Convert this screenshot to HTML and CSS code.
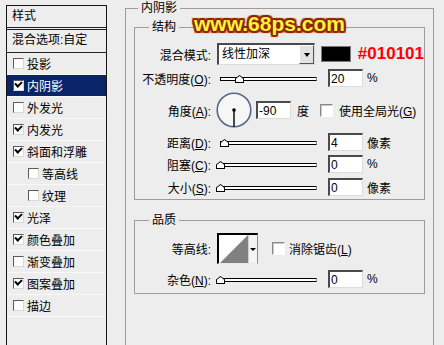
FILE: index.html
```html
<!DOCTYPE html>
<html lang="zh-CN">
<head>
  <meta charset="UTF-8" />
  <title>图层样式 - 内阴影</title>
  <link rel="stylesheet" href="styles.css">
</head>
<body>
  <div class="dialog">
    <div class="style-list">
      <div class="list-head">样式</div>
      <div class="list-blend">混合选项:自定</div>
      <div class="list-item"><span class="chk"></span>投影</div>
      <div class="list-item active"><span class="chk checked"></span>内阴影</div>
      <div class="list-item"><span class="chk"></span>外发光</div>
      <div class="list-item"><span class="chk checked"></span>内发光</div>
      <div class="list-item"><span class="chk checked"></span>斜面和浮雕</div>
      <div class="list-item sub"><span class="chk"></span>等高线</div>
      <div class="list-item sub"><span class="chk"></span>纹理</div>
      <div class="list-item"><span class="chk checked"></span>光泽</div>
      <div class="list-item"><span class="chk checked"></span>颜色叠加</div>
      <div class="list-item"><span class="chk"></span>渐变叠加</div>
      <div class="list-item"><span class="chk checked"></span>图案叠加</div>
      <div class="list-item"><span class="chk"></span>描边</div>
    </div>

    <fieldset class="group outer">
      <legend>内阴影</legend>

      <fieldset class="group section">
        <legend>结构</legend>
        <div class="row first">
          <span class="label">混合模式:</span>
          <div class="select">
            <span class="select-text">线性加深</span>
            <span class="select-btn"><i class="arrow"></i></span>
          </div>
          <span class="swatch"></span>
          <span class="color-code">#010101</span>
        </div>
        <div class="row gap2">
          <span class="label">不透明度(<u>O</u>):</span>
          <div class="slider"><div class="track"></div><span class="thumb" style="left:19px"></span></div>
          <input class="num" type="text" value="20">
          <span class="unit">%</span>
        </div>
        <div class="row angle">
          <span class="label">角度(<u>A</u>):</span>
          <svg class="dial" width="36" height="36" viewBox="0 0 36 36">
            <circle cx="18" cy="18" r="16.8" fill="#f6f6f6" stroke="#57668f" stroke-width="1.6"/>
            <line x1="18" y1="18" x2="18" y2="35" stroke="#000" stroke-width="1.4"/>
            <circle cx="18" cy="18" r="1.8" fill="#000"/>
          </svg>
          <input class="num angle-num" type="text" value="-90">
          <span class="unit deg">度</span>
          <span class="chk big"></span>
          <span class="chk-label">使用全局光(<u>G</u>)</span>
        </div>
        <div class="row gap3">
          <span class="label">距离(<u>D</u>):</span>
          <div class="slider"><div class="track"></div><span class="thumb" style="left:4px"></span></div>
          <input class="num" type="text" value="4">
          <span class="unit">像素</span>
        </div>
        <div class="row">
          <span class="label">阻塞(<u>C</u>):</span>
          <div class="slider"><div class="track"></div><span class="thumb" style="left:0px"></span></div>
          <input class="num" type="text" value="0">
          <span class="unit">%</span>
        </div>
        <div class="row gap1">
          <span class="label">大小(<u>S</u>):</span>
          <div class="slider"><div class="track"></div><span class="thumb" style="left:0px"></span></div>
          <input class="num" type="text" value="0">
          <span class="unit">像素</span>
        </div>
      </fieldset>

      <fieldset class="group section quality">
        <legend>品质</legend>
        <div class="row contour-row">
          <span class="label">等高线:</span>
          <div class="contour">
            <svg class="curve" width="29" height="28" viewBox="0 0 29 28">
              <polygon points="1,28 29,0 29,28" fill="#808080"/>
            </svg>
            <span class="contour-drop"><i class="arrow small"></i></span>
          </div>
          <span class="chk big aa"></span>
          <span class="chk-label aa-label">消除锯齿(<u>L</u>)</span>
        </div>
        <div class="row gap4">
          <span class="label">杂色(<u>N</u>):</span>
          <div class="slider"><div class="track"></div><span class="thumb" style="left:0px"></span></div>
          <input class="num" type="text" value="0">
          <span class="unit">%</span>
        </div>
      </fieldset>
    </fieldset>

    <div class="watermark">www.68ps.com</div>
  </div>
</body>
</html>
```

FILE: styles.css
```css
* {
  box-sizing: border-box;
}
body {
  margin: 0;
  width: 444px;
  height: 345px;
  overflow: hidden;
  background-color: #ededed;
  font-family: "Liberation Sans", "Noto Sans CJK SC", sans-serif;
  font-size: 12px;
  color: #000;
}
.dialog {
  position: relative;
  display: flex;
  align-items: flex-start;
}

/* 左侧样式列表 */
.style-list {
  margin: 5px 0 0 6px;
  width: 101px;
  height: 345px;
  border: 1px solid #161616;
  border-bottom: none;
}
.list-head {
  height: 24px;
  line-height: 20px;
  padding-left: 5px;
  border-bottom: 3px double #222;
}
.list-blend {
  height: 23px;
  line-height: 21px;
  padding-left: 5px;
  border-bottom: 1px solid #222;
}
.list-item {
  display: flex;
  align-items: center;
  gap: 3px;
  height: 22px;
  padding: 0 0 1px 6px;
  border-bottom: 1px solid #f8f8f8;
}
.list-item.sub {
  padding-left: 21px;
}
.list-item.active {
  background-color: #0a246a;
  color: #fff;
}

/* 复选框 */
.chk {
  position: relative;
  flex: none;
  width: 11px;
  height: 11px;
  background-color: #fff;
  border: 1px solid;
  border-color: #5a5a5a #d8d8d8 #d8d8d8 #5a5a5a;
}
.chk.checked::after {
  content: "";
  position: absolute;
  left: 1px;
  top: 0px;
  width: 5px;
  height: 3px;
  border-left: 2px solid #000;
  border-bottom: 2px solid #000;
  transform: rotate(-45deg);
}
.chk.big {
  width: 13px;
  height: 13px;
  border-color: #8a8a8a #fff #fff #8a8a8a;
  box-shadow: inset 1px 1px 0 #c8c8c8;
}

/* 分组框 */
.group {
  margin: 0;
  padding: 0;
  min-width: 0;
  border: 1px solid #9c9c9c;
}
.group legend {
  padding: 0 3px;
  line-height: 16px;
}
.outer {
  margin-left: 18px;
  width: 309px;
  height: 360px;
}
.outer > legend {
  margin-left: 12px;
}
.section {
  margin: 3px 0 0 8px;
  width: 291px;
  padding-bottom: 1px;
}
.section > legend {
  margin-left: 14px;
}
.quality {
  margin-top: 12px;
  padding-bottom: 3px;
}

/* 行 */
.row {
  display: flex;
  align-items: center;
  height: 22px;
}
.row.first {
  margin-top: 8px;
}
.row.gap1 { margin-top: 1px; }
.row.gap2 { margin-top: 2px; }
.row.gap3 { margin-top: 3px; }
.row.gap4 { margin-top: 4px; }
.row .label {
  flex: none;
  width: 76px;
  margin-right: 6px;
  text-align: right;
  white-space: nowrap;
}
.row.angle {
  height: 36px;
  margin-top: 3px;
}

/* 下拉框 */
.select {
  display: flex;
  width: 100px;
  height: 22px;
  background-color: #fff;
  border-style: solid;
  border-width: 2px 1px 1px 2px;
  border-color: #4a4a4a #dcdcdc #dcdcdc #4a4a4a;
}
.select-text {
  flex: 1;
  padding-left: 3px;
  line-height: 18px;
}
.select-btn {
  display: flex;
  align-items: center;
  justify-content: center;
  width: 15px;
  background-color: #e2e2e2;
  border: 1px solid;
  border-color: #fff #555 #555 #fff;
}
.arrow {
  width: 0;
  height: 0;
  border-left: 3.5px solid transparent;
  border-right: 3.5px solid transparent;
  border-top: 4px solid #000;
}
.arrow.small {
  border-left-width: 3px;
  border-right-width: 3px;
  border-top-width: 3px;
}
.swatch {
  width: 30px;
  height: 16px;
  margin-left: 6px;
  background-color: #000;
  border: 1px solid #7a7a7a;
}
.color-code {
  margin-left: 7px;
  font-family: "Liberation Sans", sans-serif;
  font-size: 17px;
  font-weight: bold;
  color: #ff0000;
}

/* 滑块 */
.slider {
  position: relative;
  width: 102px;
  height: 22px;
  margin-left: -1px;
  padding: 10px 1px 0 4px;
}
.track {
  height: 4px;
  background-color: #fff;
  border: 1px solid #000;
  border-right-color: #8a8a8a;
  border-radius: 0 1px 1px 0;
}
.thumb {
  position: absolute;
  top: 8px;
  width: 9px;
  height: 8px;
  background-color: #000;
  clip-path: polygon(0 100%, 0 45%, 50% 0, 100% 45%, 100% 100%);
}
.thumb::after {
  content: "";
  position: absolute;
  inset: 1px;
  background-color: #fff;
  clip-path: polygon(0 100%, 0 45%, 50% 0, 100% 45%, 100% 100%);
}

/* 数值框 */
.num {
  width: 35px;
  height: 18px;
  margin: 0 0 0 10px;
  padding: 0 0 0 1px;
  background-color: #fff;
  border-style: solid;
  border-width: 2px 1px 1px 2px;
  border-color: #4a4a4a #dcdcdc #dcdcdc #4a4a4a;
  font-family: "Liberation Sans", sans-serif;
  font-size: 12px;
  color: #000;
  outline: none;
}
.unit {
  margin-left: 4px;
}

/* 角度 */
.dial {
  flex: none;
  margin-left: -1px;
}
.angle-num {
  margin-left: 4px;
}
.unit.deg {
  margin-left: 6px;
}
.row.angle .chk {
  margin-left: 11px;
}
.chk-label {
  margin-left: 6px;
  white-space: nowrap;
}

/* 等高线 */
.row.contour-row {
  height: 31px;
  margin-top: 5px;
}
.contour {
  display: flex;
  align-items: flex-end;
  width: 41px;
  height: 31px;
  background-color: #fff;
  border-style: solid;
  border-width: 2px 1px 1px 2px;
  border-color: #000 #8a8a8a #e8e8e8 #000;
}
.curve {
  flex: none;
  display: block;
}
.contour-drop {
  display: flex;
  align-items: center;
  justify-content: center;
  align-self: stretch;
  flex: 1;
  background-color: #f4f4f4;
  border-left: 1px solid #d0d0d0;
}
.chk.aa {
  margin-left: 14px;
}
.aa-label {
  margin-left: 4px;
}

/* 水印 */
.watermark {
  position: absolute;
  left: 194px;
  top: 12px;
  font-family: "Liberation Sans", sans-serif;
  font-size: 21px;
  line-height: 24px;
  font-weight: bold;
  color: #fff23c;
  text-shadow:
    -2px 0 #8b2200, 2px 0 #8b2200, 0 -2px #8b2200, 0 2px #8b2200,
    -1px -1px #8b2200, 1px 1px #8b2200, -1px 1px #8b2200, 1px -1px #8b2200,
    -2px -2px 1px #a8381a, 2px 2px 1px #a8381a, -2px 2px 1px #a8381a, 2px -2px 1px #a8381a;
}
```
